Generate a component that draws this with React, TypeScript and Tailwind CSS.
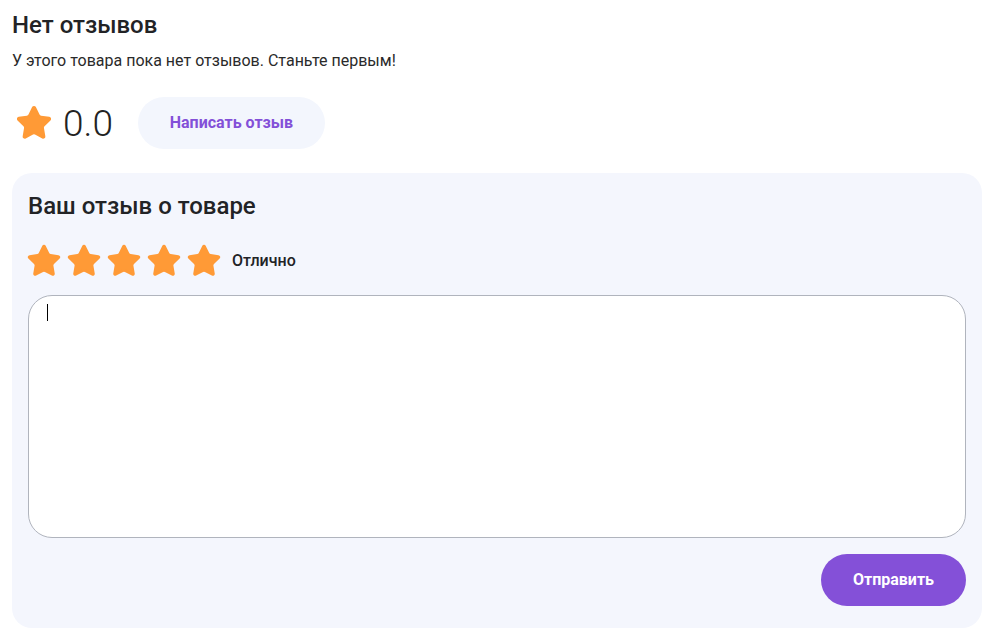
import React from "react";

const StarIcon = ({ size }: { size: number }) => (
  <svg width={size} height={size} viewBox="0 0 24 24" fill="#ff9a36" stroke="#ff9a36" strokeWidth={1.6} strokeLinejoin="round">
    <path d="M11.525 2.295a.53.53 0 0 1 .95 0l2.31 4.679a2.123 2.123 0 0 0 1.595 1.16l5.166.756a.53.53 0 0 1 .294.904l-3.736 3.638a2.123 2.123 0 0 0-.611 1.878l.882 5.14a.53.53 0 0 1-.771.56l-4.618-2.428a2.122 2.122 0 0 0-1.973 0L6.396 21.01a.53.53 0 0 1-.77-.56l.881-5.139a2.122 2.122 0 0 0-.611-1.879L2.16 9.795a.53.53 0 0 1 .294-.906l5.165-.755a2.122 2.122 0 0 0 1.597-1.16z" />
  </svg>
);

export default function App() {
  return (
    <div className="w-[995px] h-[639px] bg-white px-3 pt-[11px] text-[#222326]" style={{ fontFamily: "Roboto, 'Noto Sans', sans-serif" }}>
      <h2 className="text-[24px] font-medium leading-[28px]">Нет отзывов</h2>
      <p className="mt-[10px] text-[16px] leading-[24px] text-[#2a2a2a]">У этого товара пока нет отзывов. Станьте первым!</p>
      <div className="mt-[24px] flex items-center h-[52px]">
        <div className="flex items-center pl-[3px]">
          <StarIcon size={38} />
          <span className="ml-[10px] text-[37px] font-light leading-none text-[#222]">0.0</span>
        </div>
        <button className="ml-[25px] h-[52px] w-[187px] rounded-full bg-[#f3f6fd] text-[16px] font-bold text-[#8350d8]">
          Написать отзыв
        </button>
      </div>
      <div className="mt-[24px] w-[970px] rounded-[20px] bg-[#f4f6fd] px-4 pt-[18px] pb-[22px]">
        <h3 className="text-[24px] font-medium leading-[30px]">Ваш отзыв о товаре</h3>
        <div className="mt-[22px] flex items-center">
          <div className="flex gap-[4px] -ml-[2px]">
            {[0, 1, 2, 3, 4].map((i) => (
              <StarIcon key={i} size={36} />
            ))}
          </div>
          <span className="ml-[10px] text-[16px] font-medium">Отлично</span>
        </div>
        <div className="mt-[16px] h-[243px] w-[938px] rounded-[24px] border border-[#b0b4bd] bg-white relative">
          <div className="absolute left-[18px] top-[8px] h-[17px] w-px bg-black" />
        </div>
        <div className="mt-[16px] flex justify-end">
          <button className="h-[52px] w-[145px] rounded-full bg-[#8450d8] text-[16px] font-bold text-white">
            Отправить
          </button>
        </div>
      </div>
    </div>
  );
}
